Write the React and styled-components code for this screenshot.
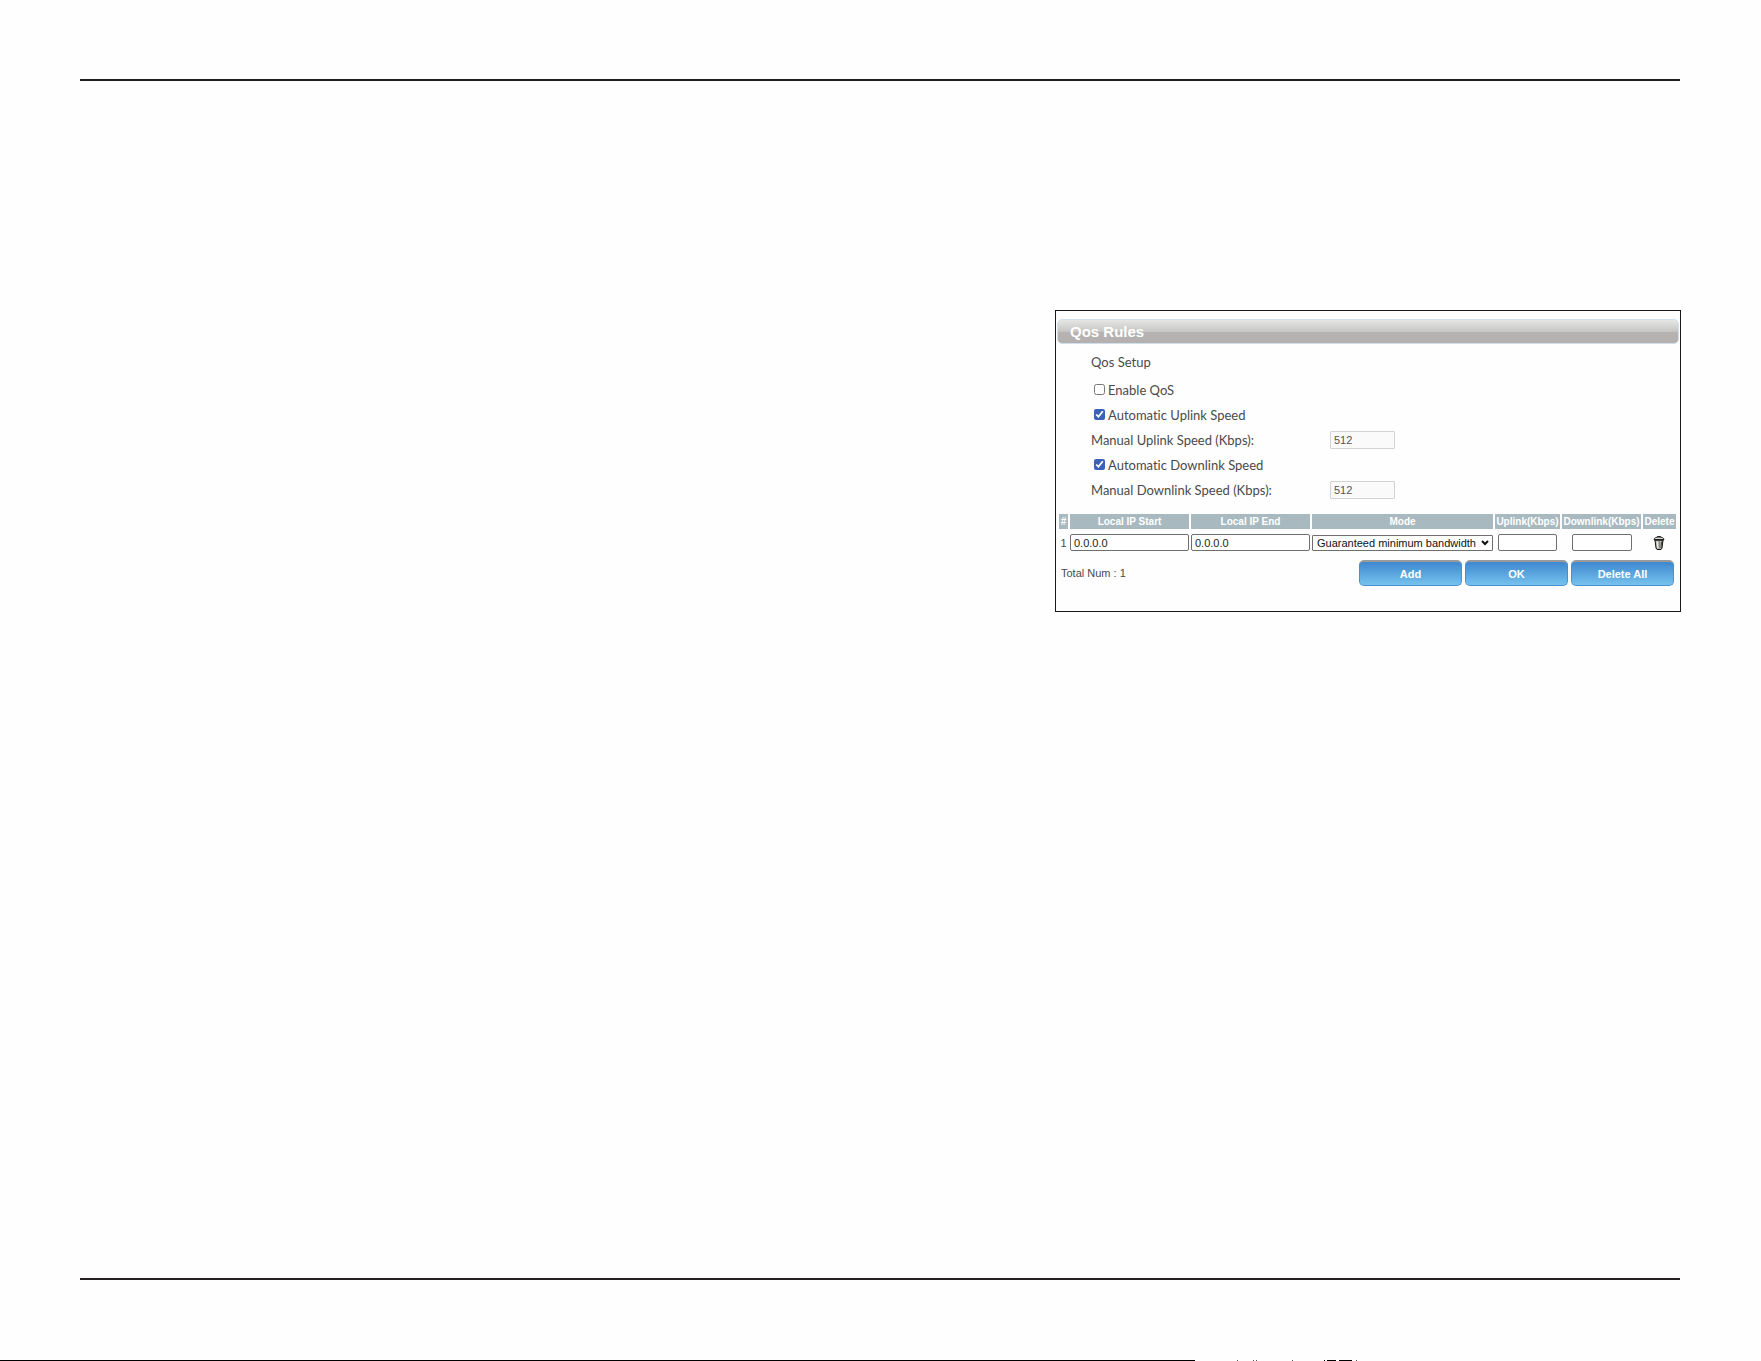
import { useState } from "react";
import styled, { createGlobalStyle } from "styled-components";

const columns = [
    { name: "#", width: 9 },
    { name: "Local IP Start", width: 119 },
    { name: "Local IP End", width: 119 },
    { name: "Mode" },
    { name: "Uplink(Kbps)", width: 65 },
    { name: "Downlink(Kbps)", width: 79 },
    { name: "Delete", width: 31 },
]

export default function App() {
    const [enabled, setEnabled] = useState(false)
    const [autoUp, setAutoUp] = useState(true)
    const [autoDown, setAutoDown] = useState(true)

    return (
        <>
            <GlobalStyle />
            <Page>
                <Rule />
                <Main>
                    <Panel>
                        <Title>Qos Rules</Title>
                        <Setup>
                            <SetupTitle>Qos Setup</SetupTitle>
                            <CheckRow>
                                <Check type="checkbox" checked={enabled} onChange={() => setEnabled(!enabled)} />
                                Enable QoS
                            </CheckRow>
                            <CheckRow>
                                <Check type="checkbox" checked={autoUp} onChange={() => setAutoUp(!autoUp)} />
                                Automatic Uplink Speed
                            </CheckRow>
                            <SpeedRow>
                                <label htmlFor="uplink">Manual Uplink Speed (Kbps):</label>
                                <Speed id="uplink" defaultValue="512" disabled={autoUp} />
                            </SpeedRow>
                            <CheckRow>
                                <Check type="checkbox" checked={autoDown} onChange={() => setAutoDown(!autoDown)} />
                                Automatic Downlink Speed
                            </CheckRow>
                            <SpeedRow>
                                <label htmlFor="downlink">Manual Downlink Speed (Kbps):</label>
                                <Speed id="downlink" defaultValue="512" disabled={autoDown} />
                            </SpeedRow>
                        </Setup>
                        <Rules>
                            <thead>
                                <tr>
                                    {columns.map((c) => <Head key={c.name} $width={c.width}>{c.name}</Head>)}
                                </tr>
                            </thead>
                            <tbody>
                                <tr>
                                    <Cell>1</Cell>
                                    <Cell><Field aria-label="Local IP Start" defaultValue="0.0.0.0" /></Cell>
                                    <Cell><Field aria-label="Local IP End" defaultValue="0.0.0.0" /></Cell>
                                    <Cell>
                                        <Mode>
                                            <select aria-label="Mode">
                                                <option>Guaranteed minimum bandwidth</option>
                                            </select>
                                            <Arrow />
                                        </Mode>
                                    </Cell>
                                    <Cell><Field aria-label="Uplink(Kbps)" $width={59} /></Cell>
                                    <Cell><Field aria-label="Downlink(Kbps)" $width={60} /></Cell>
                                    <Cell><IconButton type="button" aria-label="Delete"><Trash /></IconButton></Cell>
                                </tr>
                            </tbody>
                        </Rules>
                        <Footer>
                            <span>Total Num : 1</span>
                            <Buttons>
                                <Button type="button">Add</Button>
                                <Button type="button">OK</Button>
                                <Button type="button">Delete All</Button>
                            </Buttons>
                        </Footer>
                    </Panel>
                </Main>
                <Rule />
                <Edge>
                    <EdgeLine />
                    <svg width="170" height="1" shapeRendering="crispEdges" aria-hidden="true">
                        <path d="M129 .5h1m2 0h9m3 0h13" stroke="#000" />
                        <path d="M42 .5h1M58 .5h1M61 .5h1M97 .5h1M161 .5h1" stroke="#555" />
                    </svg>
                </Edge>
            </Page>
        </>
    )
}

function Arrow() {
    return (
        <svg width="8" height="6" viewBox="0 0 8 6" aria-hidden="true">
            <path d="M1 1l3 3 3-3" fill="none" stroke="#111" strokeWidth="2" />
        </svg>
    )
}

function Trash() {
    return (
        <svg width="12" height="14" viewBox="0 0 12 14" aria-hidden="true">
            <path d="M2 4h8l-1 8-1 1.500H4L3 12z" fill="#b4b5ac" stroke="#111" />
            <path d="M1 3.500C1 2 3 1 6 1s5 1 5 2.500z" fill="#d8d8d0" stroke="#222" />
            <path d="M4.500 1V.5h3V1M1 4h10" fill="none" stroke="#222" />
            <path d="M4 5.500l1 6.500" stroke="#f5f5f0" />
            <path d="M6.500 5.500V12" stroke="#85867e" />
            <path d="M8.500 5.500L8 12" stroke="#44443e" />
        </svg>
    )
}

const GlobalStyle = createGlobalStyle`
*{
    box-sizing: border-box;
}
body{
    margin: 0;
    background: #fefefe;
    color: #4a4a4a;
    font-family: "Liberation Sans", Arial, sans-serif;
    font-size: 11px;
}
input, select, button{
    font-family: inherit;
    font-size: 11px;
}
`

const Page = styled.div`
display: flex;
flex-direction: column;
min-height: 100vh;
padding-top: 79px;
`

const Rule = styled.hr`
flex: none;
height: 2px;
margin: 0 81px 0 80px;
border: 0;
background: #231f20;
`

const Main = styled.main`
flex: 1;
display: flex;
justify-content: flex-end;
align-items: flex-start;
padding: 229px 80px 40px;
`

const Panel = styled.section`
width: 100%;
max-width: 626px;
padding: 8px 1px 25px;
border: 1px solid #1b1819;
background: #fefefe;
`

const Title = styled.h1`
height: 25px;
margin: 0;
padding-left: 12px;
border: 1px solid #cfe0ec;
border-radius: 5px;
background: linear-gradient(#e6e6e4, #c6c6c4 50%, #b6b3b2 51%, #b4b0af);
color: #fff;
font-size: 15px;
line-height: 24px;
`

const Setup = styled.div`
padding: 6px 0 12px 34px;
font-family: Lato, sans-serif;
font-size: 13px;
font-variant-ligatures: none;
`

const SetupTitle = styled.h2`
margin: 0 0 2px;
font-size: 13px;
font-weight: 400;
line-height: 25px;
`

const CheckRow = styled.label`
display: flex;
align-items: center;
gap: 3px;
width: fit-content;
height: 25px;
padding-left: 3px;
`

const Check = styled.input`
width: 11px;
height: 11px;
margin: 0;
accent-color: #3b62b6;
`

const SpeedRow = styled.div`
display: flex;
align-items: center;
height: 25px;
label{
    width: 239px;
}
`

const Speed = styled.input`
width: 65px;
height: 18px;
padding: 0 3px;
border: 1px solid #d3d3d3;
border-radius: 1px;
background: #fafafa;
color: #555;
font-family: "Liberation Sans", Arial, sans-serif;
`

const Rules = styled.table`
width: calc(100% - 5px);
margin: 0 3px 0 2px;
table-layout: fixed;
border-collapse: separate;
border-spacing: 0;
`

const Head = styled.th`
width: ${(p) => p.$width ? p.$width + 2 + "px" : "auto"};
height: 15px;
padding: 0;
border-right: 2px solid #fefefe;
background: #a8b9c0;
color: #fff;
font-size: 10px;
line-height: 15px;
white-space: nowrap;
&:last-child{
    border-right: 0;
}
`

const Cell = styled.td`
height: 27px;
padding: 0 2px 0 0;
text-align: center;
vertical-align: middle;
`

const Field = styled.input`
display: block;
width: ${(p) => p.$width ? p.$width + "px" : "100%"};
height: 17px;
margin: 0 auto;
padding: 0 3px;
border: 1px solid #6f6f6f;
border-radius: 2px;
background: #fff;
color: #222;
`

const Mode = styled.div`
position: relative;
select{
    display: block;
    appearance: none;
    width: 100%;
    height: 16px;
    padding: 0 12px 0 4px;
    border: 1px solid #6f6f6f;
    border-radius: 1px;
    background: #fff;
    color: #111;
}
svg{
    position: absolute;
    top: 5px;
    right: 4px;
    pointer-events: none;
}
`

const IconButton = styled.button`
display: block;
margin: 0 auto;
padding: 0;
border: 0;
background: none;
svg{
    display: block;
}
`

const Footer = styled.div`
display: flex;
justify-content: space-between;
align-items: center;
padding: 4px 5px 0 4px;
`

const Buttons = styled.div`
display: flex;
gap: 3px;
`

const Button = styled.button`
width: 103px;
height: 26px;
padding: 0;
border: 1px solid #4a90d0;
border-top: 2px solid #9b9b9b;
border-radius: 5px;
background: linear-gradient(#3f87cf, #76c2ed);
color: #fff;
font-weight: 700;
`

const Edge = styled.div`
display: flex;
height: 1px;
margin-top: 80px;
overflow: hidden;
svg{
    flex: none;
}
`

const EdgeLine = styled.div`
width: 1195px;
background: #000;
`
